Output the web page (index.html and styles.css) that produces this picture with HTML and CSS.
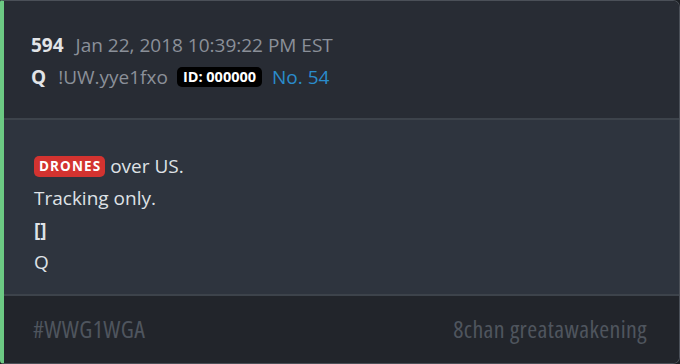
FILE: index.html
```html
<!DOCTYPE html>
<html>
<head>
<meta charset="utf-8">
<link rel="stylesheet" href="styles.css">
</head>
<body>
<div class="card">
  <div class="head">
    <div class="row">
      <span class="num">594</span>
      <span class="date">Jan 22, 2018 10:39:22 PM EST</span>
    </div>
    <div class="row">
      <span class="num">Q</span>
      <span class="trip">!UW.yye1fxo</span>
      <span class="id">ID: 000000</span>
      <span class="no">No. 54</span>
    </div>
  </div>
  <div class="body">
    <div class="line"><span class="tag">DRONES</span> over US.</div>
    <div class="line">Tracking only.</div>
    <div class="line bold">[]</div>
    <div class="line">Q</div>
  </div>
  <div class="foot">
    <span>#WWG1WGA</span>
    <span>8chan greatawakening</span>
  </div>
</div>
</body>
</html>
```
FILE: styles.css
```css
html, body {
  margin: 0;
  padding: 0;
  background: #1c1f24;
}
body {
  width: 680px;
  height: 364px;
  font-family: "Open Sans", "Liberation Sans", sans-serif;
}
.card {
  box-sizing: border-box;
  width: 680px;
  height: 364px;
  border-left: 4px solid #6cc983;
  border-top: 1px solid #4b5058;
  border-right: 1px solid #4b5058;
  border-bottom: 1px solid #4b5058;
  border-radius: 2px 7px 7px 4px;
  overflow: hidden;
  display: flex;
  flex-direction: column;
}
.head {
  background: #282c34;
  height: 119px;
  flex: none;
  box-sizing: border-box;
  padding: 28px 0 0 27px;
  border-bottom: 2px solid #3d434b;
}
.row {
  display: flex;
  align-items: center;
  gap: 12px;
  height: 32px;
  font-size: 19px;
  color: #8b9099;
}
.num {
  font-weight: 700;
  color: #e2e4e7;
}
.row .trip { margin-right: -1px; }
.id {
  background: #000;
  color: #fff;
  font-weight: 700;
  font-size: 14.5px;
  padding: 0 6px;
  height: 20px;
  line-height: 20px;
  border-radius: 5px;
  margin-left: -2px;
  margin-right: -2px;
}
.no { color: #2a8ccc; }
.body {
  background: #2e343e;
  height: 176px;
  flex: none;
  box-sizing: border-box;
  padding: 30px 0 0 30px;
  border-bottom: 2px solid #3d434b;
  color: #dfe2e6;
  font-size: 19px;
}
.line {
  height: 32px;
  line-height: 32px;
}
.bold { font-weight: 700; }
.tag {
  display: inline-block;
  background: #d33330;
  color: #fff;
  font-weight: 700;
  font-size: 13.5px;
  letter-spacing: 1.1px;
  line-height: 21px;
  padding: 0 4px 0 5px;
  border-radius: 5px;
  vertical-align: 2px;
}
.foot {
  flex: 1;
  background: #22252b;
  display: flex;
  justify-content: space-between;
  align-items: center;
  padding: 0 32px 2px 29px;
  font-size: 24px;
  letter-spacing: 0.4px;
  font-stretch: condensed;
  color: #4f555e;
}
```
